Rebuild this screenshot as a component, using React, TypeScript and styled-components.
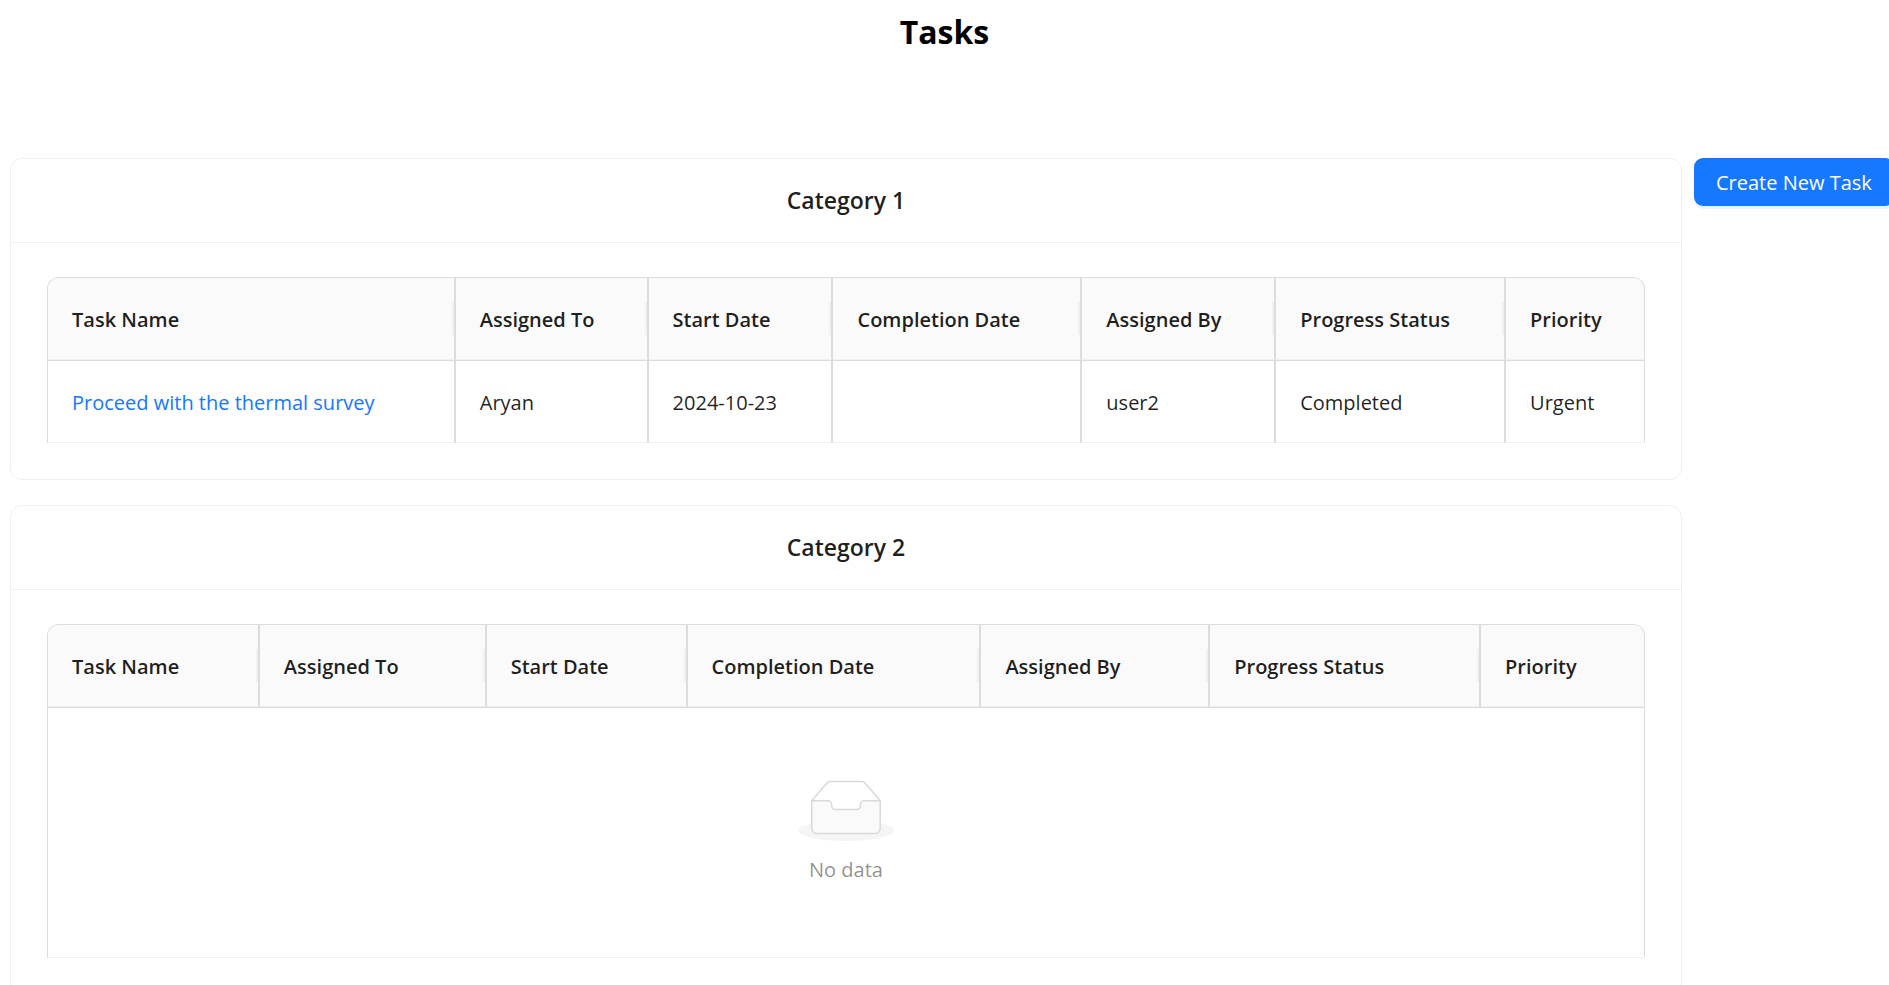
import React from 'react';
import styled, { createGlobalStyle } from 'styled-components';

const GlobalStyle = createGlobalStyle`
  *, *::before, *::after { box-sizing: border-box; }
  body {
    margin: 0;
    background: #fff;
    color: rgba(0, 0, 0, 0.88);
    font-family: 'Open Sans', 'Noto Sans', sans-serif;
    font-size: 20px;
    line-height: 33px;
    overflow-x: hidden;
  }
`;

const PageTitle = styled.h1`
  margin: 0;
  padding: 8px 0 102px;
  color: #000;
  font-size: 32px;
  font-weight: 700;
  line-height: 48px;
  text-align: center;
`;

const Board = styled.main`
  display: flex;
  align-items: flex-start;
  gap: 12px;
  margin-right: -5px;
  padding-left: 10px;
`;

const CardList = styled.div`
  display: flex;
  flex: 1;
  flex-direction: column;
  gap: 25px;
  min-width: 0;
`;

const Card = styled.section`
  border: 1px solid #f0f0f0;
  border-radius: 12px;
  background: #fff;
`;

const CardTitle = styled.h2`
  margin: 0;
  padding: 25px 36px;
  border-bottom: 1px solid #f0f0f0;
  font-size: 23px;
  font-weight: 600;
  line-height: 33px;
  text-align: center;
`;

const CardBody = styled.div`
  padding: 34px 36px 36px;
`;

const TaskTable = styled.table`
  width: 100%;
  table-layout: fixed;
  border: solid #dcdcdc;
  border-width: 1px 0 0 1px;
  border-spacing: 0;
  border-radius: 12px 12px 0 0;
`;

const Column = styled.col<{ $share: number }>`
  width: ${({ $share }) => $share}%;
`;

const HeaderCell = styled.th`
  position: relative;
  padding: 25px 24px 23px;
  border-right: 2px solid #dcdcdc;
  border-bottom: 1px solid #f0f0f0;
  background: #fafafa;
  font-weight: 600;
  text-align: left;
  white-space: nowrap;

  &:first-child { border-top-left-radius: 11px; }

  &:last-child {
    border-right-width: 1px;
    border-top-right-radius: 11px;
  }

  &:not(:last-child)::after {
    content: '';
    position: absolute;
    top: 24px;
    right: 0;
    width: 2px;
    height: 33px;
    background: #f0f0f0;
  }
`;

const Cell = styled.td`
  padding: 25px 24px 23px;
  border: solid #dcdcdc;
  border-width: 1px 2px 1px 0;
  border-bottom-color: #f0f0f0;
  white-space: nowrap;

  &:last-child { border-right-width: 1px; }
`;

const TaskLink = styled.a`
  color: #1677ff;
  text-decoration: none;
`;

const Empty = styled.div`
  display: flex;
  flex-direction: column;
  align-items: center;
  gap: 12px;
  padding: 47px 0 48px;
  color: rgba(0, 0, 0, 0.45);

  svg { display: block; }
`;

const CreateButton = styled.button`
  flex: none;
  width: 200px;
  height: 48px;
  padding: 0 22px;
  border: 0;
  border-radius: 9px;
  background: #1677ff;
  box-shadow: 0 3px 0 rgba(5, 145, 255, 0.1);
  color: #fff;
  font: inherit;
  text-align: left;
  white-space: nowrap;
  cursor: pointer;
`;

const HEADINGS = [
  'Task Name',
  'Assigned To',
  'Start Date',
  'Completion Date',
  'Assigned By',
  'Progress Status',
  'Priority',
];

type Category = { title: string; widths: number[]; tasks: string[][] };

const CATEGORIES: Category[] = [
  {
    title: 'Category 1',
    widths: [408, 193, 185, 249, 194, 230, 139],
    tasks: [
      ['Proceed with the thermal survey', 'Aryan', '2024-10-23', '', 'user2', 'Completed', 'Urgent'],
    ],
  },
  { title: 'Category 2', widths: [212, 227, 201, 294, 229, 271, 164], tasks: [] },
];

function EmptyTray() {
  return (
    <svg width="96" height="61" viewBox="0 0 64 41" aria-hidden="true">
      <g transform="translate(0 1)" fill="none" fillRule="evenodd">
        <ellipse fill="#f5f5f5" cx="32" cy="33" rx="32" ry="7" />
        <g fillRule="nonzero" stroke="#d9d9d9">
          <path d="M55 12.76L44.854 1.258C44.367.474 43.656 0 42.907 0H21.093c-.749 0-1.46.474-1.947 1.257L9 12.761V22h46v-9.24z" />
          <path
            d="M41.613 15.931c0-1.605.994-2.93 2.227-2.931H55v18.137C55 33.26 53.68 35 52.05 35h-40.1C10.32 35 9 33.259 9 31.137V13h11.16c1.233 0 2.227 1.323 2.227 2.928v.022c0 1.605 1.005 2.901 2.237 2.901h14.752c1.232 0 2.237-1.308 2.237-2.913v-.007z"
            fill="#fafafa"
          />
        </g>
      </g>
    </svg>
  );
}

function CategoryCard({ title, widths, tasks }: Category) {
  const total = widths.reduce((sum, width) => sum + width, 0);
  return (
    <Card>
      <CardTitle>{title}</CardTitle>
      <CardBody>
        <TaskTable aria-label={title}>
          <colgroup>
            {widths.map((width, i) => (
              <Column key={HEADINGS[i]} $share={(width / total) * 100} />
            ))}
          </colgroup>
          <thead>
            <tr>
              {HEADINGS.map((heading) => (
                <HeaderCell key={heading} scope="col">{heading}</HeaderCell>
              ))}
            </tr>
          </thead>
          <tbody>
            {tasks.map(([name, ...details]) => (
              <tr key={name}>
                <Cell><TaskLink href="#task">{name}</TaskLink></Cell>
                {details.map((detail, i) => (
                  <Cell key={HEADINGS[i + 1]}>{detail}</Cell>
                ))}
              </tr>
            ))}
            {tasks.length === 0 && (
              <tr>
                <Cell colSpan={HEADINGS.length}>
                  <Empty>
                    <EmptyTray />
                    <span>No data</span>
                  </Empty>
                </Cell>
              </tr>
            )}
          </tbody>
        </TaskTable>
      </CardBody>
    </Card>
  );
}

export default function App() {
  return (
    <>
      <GlobalStyle />
      <PageTitle>Tasks</PageTitle>
      <Board>
        <CardList>
          {CATEGORIES.map((category) => (
            <CategoryCard key={category.title} {...category} />
          ))}
        </CardList>
        <CreateButton type="button">Create New Task</CreateButton>
      </Board>
    </>
  );
}
